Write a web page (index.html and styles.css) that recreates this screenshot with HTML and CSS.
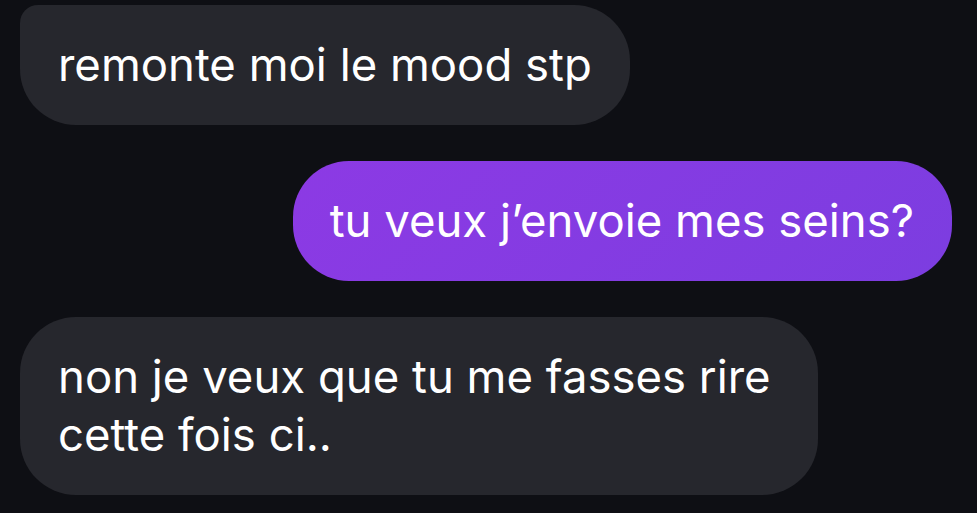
FILE: index.html
```html
<!DOCTYPE html>
<html lang="fr">
<head>
    <meta charset="UTF-8">
    <meta name="viewport" content="width=device-width, initial-scale=1.0">
    <title>Messages</title>
    <link rel="stylesheet" href="styles.css">
</head>
<body>
    <div class="chat">
        <div class="msg received first">remonte moi le mood stp</div>
        <div class="msg sent">tu veux j’envoie mes seins?</div>
        <div class="msg received">non je veux que tu me fasses rire cette fois ci..</div>
    </div>
</body>
</html>
```

FILE: styles.css
```css
* {
    box-sizing: border-box;
    margin: 0;
    padding: 0;
}

body {
    background-color: #0e0f14;
    font-family: 'Inter', 'Noto Sans', sans-serif;
    color: #fff;
    height: 100vh;
    overflow: hidden;
}

.chat {
    display: flex;
    flex-direction: column;
    gap: 36px;
    padding: 5px 25px 0 20px;
}

.msg {
    max-width: 798px;
    width: fit-content;
    padding: 31px 38px;
    font-size: 45.5px;
    line-height: 58px;
    border-radius: 56px;
}

.received {
    background-color: #26272d;
    align-self: flex-start;
}

.received.first {
    border-top-left-radius: 18px;
}

.sent {
    background: linear-gradient(135deg, #8c3ae4, #7c3de0);
    align-self: flex-end;
    padding-left: 37px;
}
```
